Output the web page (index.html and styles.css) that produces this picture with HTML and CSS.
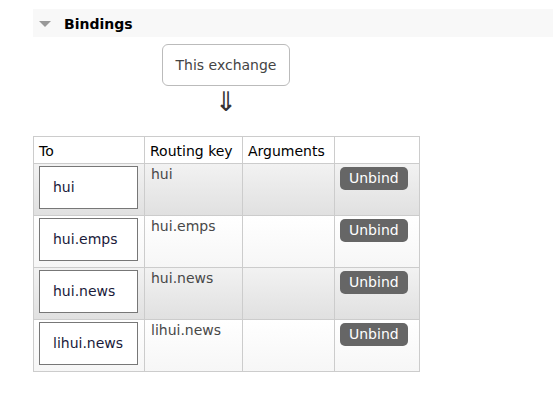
FILE: index.html
```html
<!DOCTYPE html>
<html lang="en">

<head>
    <meta charset="utf-8">
    <meta name="viewport" content="width=device-width, initial-scale=1.0">
    <title>Bindings</title>
    <link rel="stylesheet" href="styles.css">
</head>

<body>
    <section class="section">
        <h2 class="section-title"><span class="toggle"></span>Bindings</h2>

        <div class="bindings-wrapper">
            <div class="this-exchange">
                <span class="exchange-box">This exchange</span>
                <span class="arrow">&dArr;</span>
            </div>

            <table class="list">
                <colgroup>
                    <col class="c-to">
                    <col class="c-key">
                    <col class="c-args">
                    <col class="c-action">
                </colgroup>
                <thead>
                    <tr>
                        <th>To</th>
                        <th>Routing key</th>
                        <th>Arguments</th>
                        <th></th>
                    </tr>
                </thead>
                <tbody>
                    <tr class="alt1">
                        <td><span class="queue">hui</span></td>
                        <td class="key">hui</td>
                        <td></td>
                        <td><button class="unbind">Unbind</button></td>
                    </tr>
                    <tr class="alt2">
                        <td><span class="queue">hui.emps</span></td>
                        <td class="key">hui.emps</td>
                        <td></td>
                        <td><button class="unbind">Unbind</button></td>
                    </tr>
                    <tr class="alt1">
                        <td><span class="queue">hui.news</span></td>
                        <td class="key">hui.news</td>
                        <td></td>
                        <td><button class="unbind">Unbind</button></td>
                    </tr>
                    <tr class="alt2">
                        <td><span class="queue">lihui.news</span></td>
                        <td class="key">lihui.news</td>
                        <td></td>
                        <td><button class="unbind">Unbind</button></td>
                    </tr>
                </tbody>
            </table>
        </div>
    </section>
</body>

</html>
```

FILE: styles.css
```css
body {
    margin: 0;
    font: 14px "DejaVu Sans", Verdana, sans-serif;
    color: #000;
    background: #fff;
}

.section {
    margin: 9px 0 0 33px;
}

.section-title {
    display: flex;
    align-items: center;
    height: 28px;
    margin: 0;
    padding: 1px 0 0 6px;
    box-sizing: border-box;
    background-color: #f8f8f8;
    font-size: 14px;
    font-weight: bold;
}

.toggle {
    width: 0;
    height: 0;
    margin-right: 13px;
    border-left: 6px solid transparent;
    border-right: 6px solid transparent;
    border-top: 6px solid #999;
}

.this-exchange {
    display: flex;
    flex-direction: column;
    align-items: center;
    width: 128px;
    margin: 7px 0 0 129px;
}

.exchange-box {
    box-sizing: border-box;
    width: 128px;
    height: 42px;
    padding-top: 12px;
    text-align: center;
    color: #444;
    border: 1px solid #bbb;
    border-radius: 6px;
}

.arrow {
    margin-top: 2px;
    font-size: 27px;
    line-height: 28px;
    color: #333;
}

.list {
    margin-top: 20px;
    border-collapse: collapse;
    table-layout: fixed;
    width: 386px;
}

.c-to {
    width: 111px;
}

.c-key {
    width: 98px;
}

.c-args {
    width: 92px;
}

.c-action {
    width: 85px;
}

.list th {
    padding: 6px 5px 3px;
    text-align: left;
    font-weight: normal;
    line-height: 17px;
    border: 1px solid #ccc;
    background: #fff;
}

.list td {
    padding: 2px 5px 6px;
    vertical-align: top;
    line-height: 17px;
    border: 1px solid #ccc;
}

.list tr.alt1 {
    background: linear-gradient(#f2f2f2, #e0e0e0);
}

.list tr.alt2 {
    background: linear-gradient(#fff, #f6f6f6);
}

.list td.key {
    color: #484848;
    padding-left: 6px;
}

.queue {
    display: block;
    box-sizing: border-box;
    width: 99px;
    height: 43px;
    padding: 12px 0 0 13px;
    color: #1a1a3a;
    background: #fff;
    border: 1px solid #777;
}

.unbind {
    display: block;
    margin-top: 1px;
    padding: 3px 9px;
    height: 23px;
    font: 14px "DejaVu Sans", Verdana, sans-serif;
    line-height: 17px;
    color: #fff;
    background: #666;
    border: none;
    border-radius: 5px;
}
```
